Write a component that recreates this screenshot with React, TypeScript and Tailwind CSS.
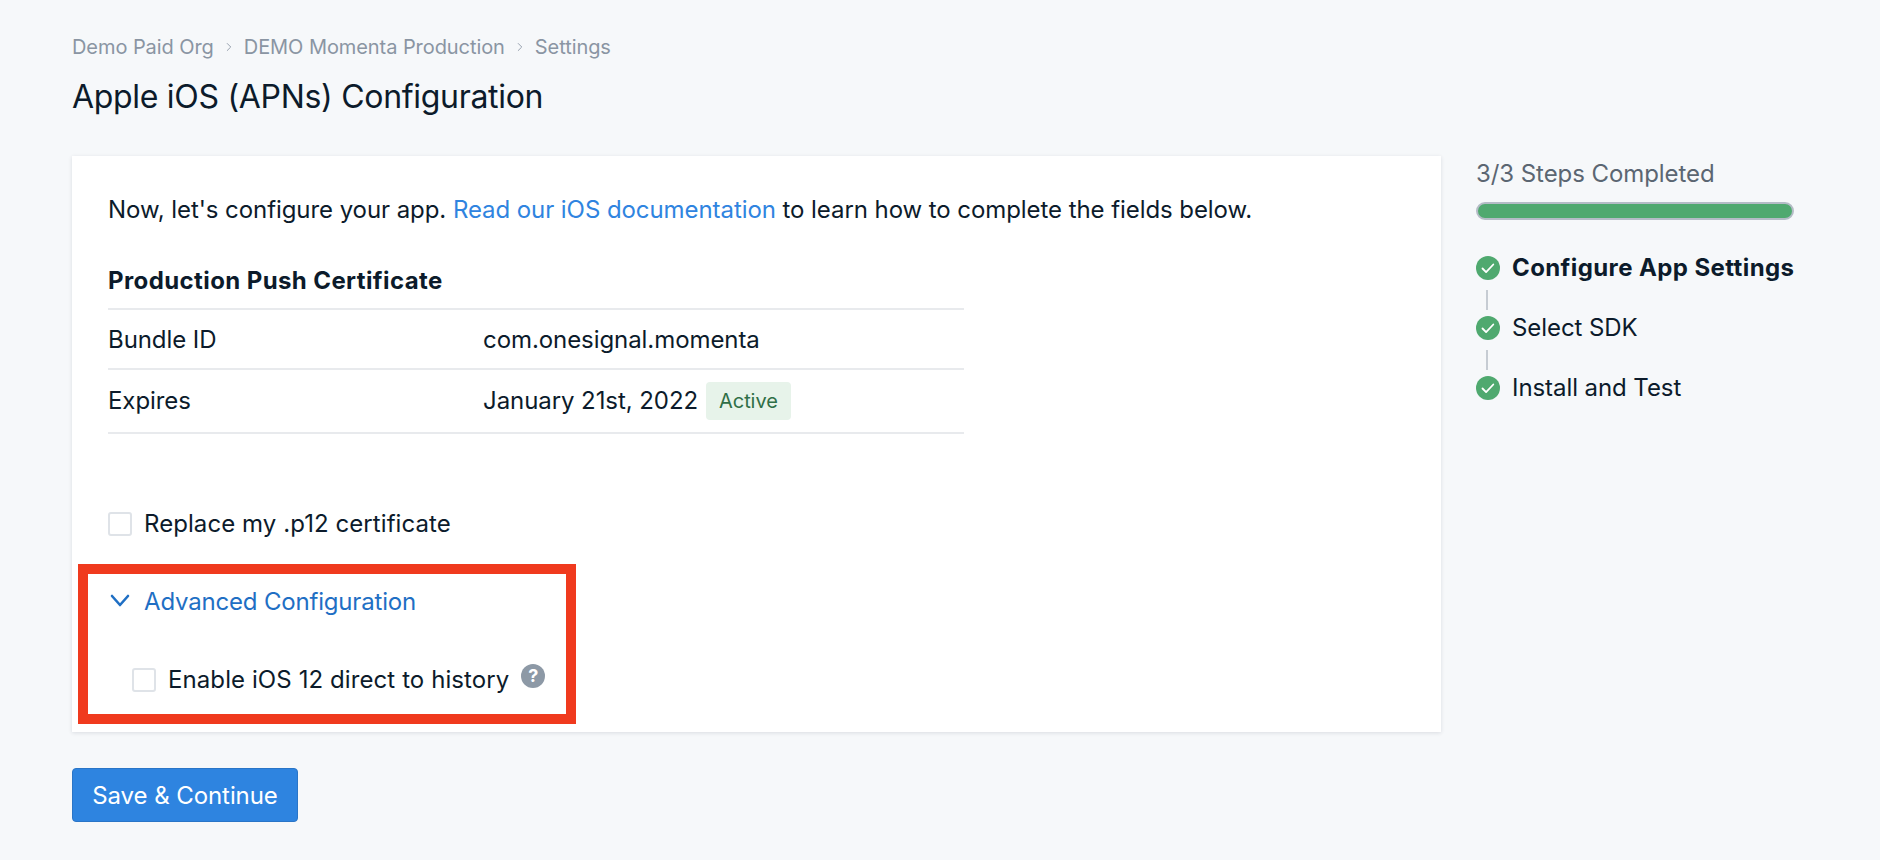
import { ChevronRight } from 'lucide-react'

const steps = [
  { label: 'Configure App Settings', active: true },
  { label: 'Select SDK', active: false },
  { label: 'Install and Test', active: false },
]

const Checkbox = () => (
  <span className="block w-6 h-6 shrink-0 bg-white border-2 border-[#dfe3e8] rounded-[3px]" />
)

const StepIcon = () => (
  <svg width="24" height="24" viewBox="0 0 24 24" className="shrink-0">
    <circle cx="12" cy="12" r="12" fill="#4fa96f" />
    <path d="M6.5 12.5l3.6 3.6 7.2-7.6" fill="none" stroke="#fff" strokeWidth="1.8" strokeLinecap="round" strokeLinejoin="round" />
  </svg>
)

const HelpIcon = () => (
  <span className="flex items-center justify-center w-6 h-6 rounded-full bg-[#8d99a6] text-white text-[18px] font-bold leading-none">
    ?
  </span>
)

export default function App() {
  return (
    <div className="min-h-[860px] bg-[#f6f8fa] pl-[72px] pr-[86px] pt-[35px] font-['Inter',sans-serif] text-[#0c1b2b] tracking-[-0.07px]">
      <div className="flex items-center h-6 text-[20px] text-[#8a95a3]">
        <span>Demo Paid Org</span>
        <ChevronRight size={14} className="mx-[8px]" strokeWidth={1.5} />
        <span>DEMO Momenta Production</span>
        <ChevronRight size={14} className="mx-[8px]" strokeWidth={1.5} />
        <span>Settings</span>
      </div>
      <h1 className="mt-[20px] text-[32px] leading-[36px] tracking-[-0.3px]">Apple iOS (APNs) Configuration</h1>

      <div className="flex mt-[41px]">
        <div className="w-[1369px] shrink-0">
          <div className="h-[576px] bg-white px-9 pt-[40px] shadow-[0_1px_4px_rgba(15,28,46,0.12)] text-[24px]">
            <p className="leading-7">
              Now, let's configure your app.{' '}
              <span className="text-[#2f84e0]">Read our iOS documentation</span> to learn how to complete the fields below.
            </p>
            <h2 className="mt-[43px] h-[41px] font-bold leading-7 tracking-[0.4px]">Production Push Certificate</h2>
            <div className="w-[856px] border-t-2 border-[#e8eaed]">
              <div className="flex items-center h-[60px] pt-[2px] border-b-2 border-[#e8eaed]">
                <span className="w-[375px]">Bundle ID</span>
                <span>com.onesignal.momenta</span>
              </div>
              <div className="flex items-center h-[64px] border-b-2 border-[#e8eaed]">
                <span className="w-[375px]">Expires</span>
                <span>January 21st, 2022</span>
                <span className="ml-[8px] flex items-center h-[38px] px-[13px] rounded-[4px] bg-[#e7f3ea] text-[#2f6f47] text-[20px]">Active</span>
              </div>
            </div>

            <label className="flex items-center gap-3 mt-[78px] h-6">
              <Checkbox />
              <span className="tracking-[0.07px]">Replace my .p12 certificate</span>
            </label>

            <div className="-ml-[30px] mt-[28px] w-[498px] h-[160px] border-[10px] border-[#f03a1e] pl-5 pt-[16px]">
              <div className="flex items-center gap-3 h-6 text-[#1f6fc4]">
                <svg width="24" height="24" viewBox="0 0 24 24" className="shrink-0">
                  <path d="M4 6l8 9 8-9" fill="none" stroke="currentColor" strokeWidth="2.6" strokeLinecap="round" strokeLinejoin="round" />
                </svg>
                <span className="tracking-[-0.18px]">Advanced Configuration</span>
              </div>
              <div className="flex items-center gap-3 mt-[54px] h-6 pl-6">
                <Checkbox />
                <span className="tracking-[0.09px]">Enable iOS 12 direct to history</span>
                <span className="-mt-[8px]"><HelpIcon /></span>
              </div>
            </div>
          </div>

          <button className="mt-9 h-[54px] w-[226px] pt-[1px] bg-[#2e84e0] border border-[#2a75c7] rounded-[4px] text-white text-[24px]">
            Save &amp; Continue
          </button>
        </div>

        <div className="ml-[35px] w-[318px] pt-[4px]">
          <div className="h-7 text-[24px] leading-7 text-[#5b6672]">3/3 Steps Completed</div>
          <div className="mt-[14px] h-[18px] rounded-full border-2 border-[#b4bcc6] bg-[#4fa96f]" />
          <div className="mt-9">
            {steps.map((step, i) => (
              <div key={step.label}>
                {i > 0 && <div className="ml-[10px] mt-[10px] mb-[6px] w-[2px] h-5 bg-[#c6ccd3]" />}
                <div className="flex items-center gap-3 h-6 text-[24px]">
                  <StepIcon />
                  <span className={step.active ? 'font-bold whitespace-nowrap tracking-[0.4px]' : 'whitespace-nowrap'}>{step.label}</span>
                </div>
              </div>
            ))}
          </div>
        </div>
      </div>
    </div>
  )
}
